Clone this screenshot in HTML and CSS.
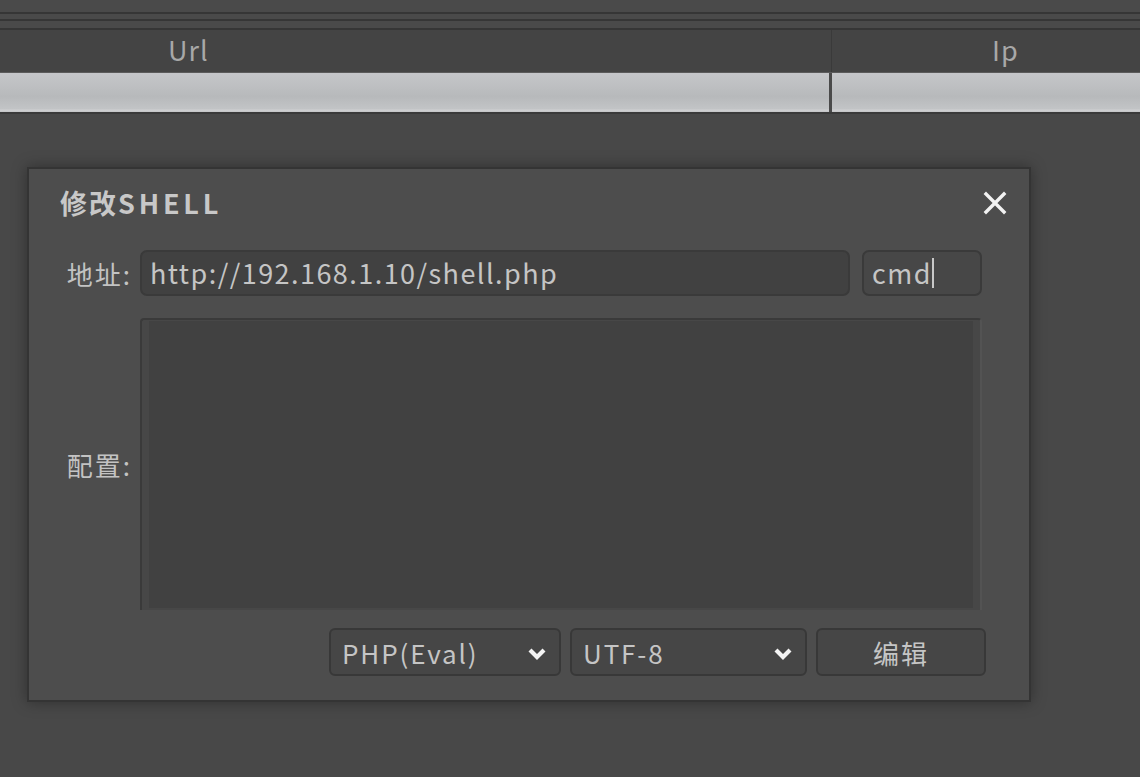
FILE: index.html
```html
<!DOCTYPE html>
<html lang="zh">
<head>
<meta charset="utf-8">
<title>修改SHELL</title>
<link rel="stylesheet" href="styles.css">
</head>
<body>
<div class="app">
  <div class="chrome">
    <div class="chrome-line"></div>
    <div class="chrome-line"></div>
    <div class="chrome-line last"></div>
  </div>
  <div class="grid-head">
    <div class="col col-url">Url</div>
    <div class="col col-ip">Ip</div>
  </div>
  <div class="grid-row">
    <div class="cell cell-url"></div>
    <div class="cell cell-ip"></div>
  </div>
  <div class="workspace">
    <div class="dialog">
      <div class="dialog-title">
        <span class="title-text">修改<span class="title-latin">SHELL</span></span>
        <span class="close">
          <svg width="24" height="24" viewBox="0 0 24 24"><path d="M3 3 L21 21 M21 3 L3 21" stroke="#f2f2f2" stroke-width="3.4" stroke-linecap="square" fill="none"/></svg>
        </span>
      </div>
      <div class="form-row">
        <div class="label">地址:</div>
        <div class="field field-url">http://192.168.1.10/shell.php</div>
        <div class="field field-pass">cmd<span class="caret"></span></div>
      </div>
      <div class="form-row config-row">
        <div class="label">配置:</div>
        <div class="config">
          <div class="config-inner"></div>
        </div>
      </div>
      <div class="actions">
        <div class="select select-type">
          <span>PHP(Eval)</span>
          <svg class="chev" width="20" height="14" viewBox="0 0 20 14"><path d="M3 3 L10 10 L17 3" stroke="#f4f4f4" stroke-width="4.2" fill="none"/></svg>
        </div>
        <div class="select select-enc">
          <span>UTF-8</span>
          <svg class="chev" width="20" height="14" viewBox="0 0 20 14"><path d="M3 3 L10 10 L17 3" stroke="#f4f4f4" stroke-width="4.2" fill="none"/></svg>
        </div>
        <div class="button">编辑</div>
      </div>
    </div>
  </div>
</div>
</body>
</html>
```
FILE: styles.css
```css
* { box-sizing: border-box; }
html, body {
  margin: 0;
  padding: 0;
  width: 1140px;
  height: 777px;
  overflow: hidden;
  background: #484848;
}
body {
  font-family: "Noto Sans CJK SC", "Noto Sans", sans-serif;
  color: #c5c5c5;
}
.app {
  width: 1140px;
  height: 777px;
  background: #484848;
}
.chrome {
  padding-top: 12px;
  background: #4a4a4a;
}
.chrome-line {
  border-top: 2px solid #363636;
}
.chrome-line:nth-child(1) { height: 7px; }
.chrome-line:nth-child(2) { height: 9px; }
.chrome-line.last { height: 2px; }
.grid-head {
  display: flex;
  height: 42px;
  background: #444444;
}
.col {
  font-size: 27px;
  line-height: 40px;
  color: #a8a8a8;
  letter-spacing: 1px;
}
.col-url {
  width: 832px;
  border-right: 1px solid #3a3a3a;
  padding-left: 168px;
}
.col-ip {
  flex: 1;
  padding-left: 160px;
}
.grid-row {
  display: flex;
  height: 42px;
  border-top: 1px solid #5b5b5b;
  border-bottom: 2px solid #3a3a3a;
  background: linear-gradient(#c5c6c9 0%, #bcbec0 40%, #b7b9bb 60%, #c2c4c6 92%, #cfd0d2 95%, #c3c4c6 100%);
}
.cell-url {
  width: 832px;
  border-right: 3px solid #4a4a4a;
}
.cell-ip {
  flex: 1;
}
.workspace {
  padding: 53px 0 0 27px;
}
.dialog {
  width: 1004px;
  height: 535px;
  border: 2px solid #343434;
  background: #4d4d4d;
  box-shadow: 0 0 14px rgba(0, 0, 0, 0.35);
  padding: 16px 47px 24px 31px;
  display: flex;
  flex-direction: column;
}
.dialog-title {
  height: 34px;
  display: flex;
  align-items: center;
  justify-content: space-between;
}
.title-text {
  font-weight: bold;
  font-size: 27px;
  color: #c8c8c8;
  letter-spacing: 2px;
}
.title-latin {
  letter-spacing: 3.8px;
}
.close {
  margin-right: -25px;
  display: flex;
  margin-top: 2px;
}
.form-row {
  display: flex;
  align-items: center;
  margin-top: 31px;
  height: 46px;
}
.label {
  width: 80px;
  padding-right: 8px;
  text-align: right;
  font-size: 26px;
  letter-spacing: 2px;
  color: #c3c3c3;
  flex-shrink: 0;
}
.field {
  height: 46px;
  border: 2px solid #3a3a3a;
  border-radius: 7px;
  background: #414141;
  font-size: 27px;
  letter-spacing: 1.45px;
  line-height: 40px;
  padding-left: 8px;
  color: #c5c5c5;
  display: flex;
  align-items: center;
}
.field-url {
  width: 710px;
}
.field-pass {
  width: 120px;
  margin-left: 12px;
  background: #474747;
}
.caret {
  display: inline-block;
  width: 2px;
  height: 30px;
  background: #c8c8c8;
  margin-left: 0;
}
.config-row {
  margin-top: 22px;
  height: 292px;
}
.config {
  width: 842px;
  height: 292px;
  border-top: 2px solid #3a3a3a;
  border-left: 2px solid #3a3a3a;
  border-right: 2px solid #535353;
  border-top-left-radius: 4px;
  border-top-right-radius: 4px;
  background: #474747;
  padding: 1px 7px 2px 7px;
}
.config-inner {
  width: 100%;
  height: 100%;
  background: #414141;
}
.actions {
  display: flex;
  justify-content: flex-end;
  gap: 9px;
  margin-top: 18px;
  height: 48px;
  margin-right: -4px;
}
.select, .button {
  height: 48px;
  border: 2px solid #383838;
  border-radius: 6px;
  background: #464646;
  font-size: 26px;
  letter-spacing: 1.9px;
  color: #c5c5c5;
  display: flex;
  align-items: center;
}
.select {
  justify-content: space-between;
  padding: 0 12px 0 11px;
}
.select-type { width: 232px; }
.select-enc { width: 237px; }
.chev { margin-top: 4px; }
.button {
  width: 170px;
  justify-content: center;
  letter-spacing: 2px;
}
```
